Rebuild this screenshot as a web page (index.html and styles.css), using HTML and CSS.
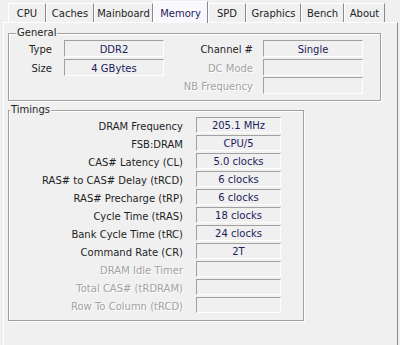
FILE: index.html
```html
<!DOCTYPE html>
<html>
<head>
<meta charset="utf-8">
<link rel="stylesheet" href="styles.css">
</head>
<body>
<div class="win">
  <div class="tabs">
    <div class="tab">CPU</div>
    <div class="tab">Caches</div>
    <div class="tab">Mainboard</div>
    <div class="tab active">Memory</div>
    <div class="tab">SPD</div>
    <div class="tab">Graphics</div>
    <div class="tab">Bench</div>
    <div class="tab">About</div>
  </div>
  <div class="panel">
    <div class="group general">
      <div class="gtitle">General</div>
      <div class="ggrid">
        <span class="lbl">Type</span><span class="val">DDR2</span><span class="lbl">Channel #</span><span class="val">Single</span>
        <span class="lbl">Size</span><span class="val">4 GBytes</span><span class="lbl dis">DC Mode</span><span class="val"></span>
        <span></span><span></span><span class="lbl dis">NB Frequency</span><span class="val"></span>
      </div>
    </div>
    <div class="group timings">
      <div class="gtitle">Timings</div>
      <div class="tgrid">
        <span class="lbl">DRAM Frequency</span><span class="val">205.1 MHz</span>
        <span class="lbl">FSB:DRAM</span><span class="val">CPU/5</span>
        <span class="lbl">CAS# Latency (CL)</span><span class="val">5.0 clocks</span>
        <span class="lbl">RAS# to CAS# Delay (tRCD)</span><span class="val">6 clocks</span>
        <span class="lbl">RAS# Precharge (tRP)</span><span class="val">6 clocks</span>
        <span class="lbl">Cycle Time (tRAS)</span><span class="val">18 clocks</span>
        <span class="lbl">Bank Cycle Time (tRC)</span><span class="val">24 clocks</span>
        <span class="lbl">Command Rate (CR)</span><span class="val">2T</span>
        <span class="lbl dis">DRAM Idle Timer</span><span class="val"></span>
        <span class="lbl dis">Total CAS# (tRDRAM)</span><span class="val"></span>
        <span class="lbl dis">Row To Column (tRCD)</span><span class="val"></span>
      </div>
    </div>
  </div>
</div>
</body>
</html>
```

FILE: styles.css
```css
html, body {
  margin: 0;
  padding: 0;
  background: #f0f0f0;
}
body {
  font-family: "DejaVu Sans", "Liberation Sans", sans-serif;
  font-size: 10px;
  color: #1e1e1e;
  width: 400px;
  height: 345px;
  overflow: hidden;
}
.win {
  padding-top: 1px;
}
.tabs {
  display: flex;
  align-items: flex-end;
  height: 21px;
  padding-left: 8px;
  position: relative;
  z-index: 1;
}
.tab {
  height: 19px;
  line-height: 20px;
  text-align: center;
  border-left: 1px solid #fff;
  border-top: 1px solid #fff;
  border-right: 1px solid #8a8a8a;
  box-sizing: border-box;
  color: #1e1e1e;
}
.tab:nth-child(1) { width: 38px; }
.tab:nth-child(2) { width: 48px; }
.tab:nth-child(3) { width: 59px; }
.tab:nth-child(4) { width: 55px; }
.tab:nth-child(5) { width: 38px; }
.tab:nth-child(6) { width: 55px; }
.tab:nth-child(7) { width: 43px; }
.tab:nth-child(8) { width: 41px; }
.tab.active {
  height: 22px;
  line-height: 23px;
  margin-bottom: -1px;
  background: #f9f9fd;
  color: #1c1c5c;
}
.panel {
  margin: 0 2px 0 3px;
  height: 340px;
  border-top: 1px solid #fff;
  border-left: 1px solid #fff;
  border-right: 1px solid #8a8a8a;
  padding: 10px 0 0 4px;
  box-sizing: border-box;
}
.group {
  position: relative;
  border: 1px solid #a0a0a0;
  box-shadow: inset 1px 1px 0 #fff, 1px 1px 0 #fff;
}
.gtitle {
  position: absolute;
  top: -7px;
  left: 7px;
  padding: 0 1px;
  line-height: 12px;
  background: #f0f0f0;
  color: #1e1e1e;
}
.timings .gtitle {
  left: 1px;
}
.general {
  width: 373px;
  box-sizing: border-box;
  padding: 6px 0 6px 0;
}
.timings {
  width: 296px;
  box-sizing: border-box;
  margin-top: 9px;
  padding: 6px 0 7px 0;
}
.ggrid {
  display: grid;
  grid-template-columns: 55px 100px 99px 100px;
  grid-auto-rows: 17px;
  row-gap: 1.5px;
}
.tgrid {
  display: grid;
  grid-template-columns: 187px 85px;
  grid-auto-rows: 16px;
  row-gap: 2px;
}
.lbl {
  text-align: right;
  line-height: 17px;
  padding-top: 1px;
  white-space: nowrap;
}
.ggrid .lbl { padding-right: 12px; }
.ggrid .lbl:nth-child(3), .ggrid .lbl:nth-child(7), .ggrid .lbl:nth-child(11) { padding-right: 10px; }
.tgrid .lbl { padding-right: 13px; line-height: 16px; padding-top: 2px; }
.lbl.dis {
  color: #a3a3a3;
  text-shadow: 1px 1px 0 #fff;
}
.val {
  border-top: 1px solid #a0a0a0;
  border-left: 1px solid #a0a0a0;
  border-right: 1px solid #fff;
  border-bottom: 1px solid #fff;
  background: #f0f0f0;
  text-align: center;
  color: #1c1c5c;
  line-height: 15px;
  padding-top: 1px;
  white-space: nowrap;
  overflow: hidden;
}
.tgrid .val { line-height: 14px; padding-top: 1px; }
```
